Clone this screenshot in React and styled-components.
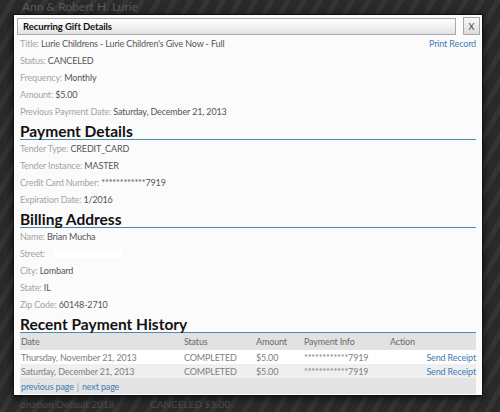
import React from "react";
import styled, { createGlobalStyle } from "styled-components";

const Global = createGlobalStyle`
  html, body { margin: 0; padding: 0; }
  body {
    width: 500px; height: 412px; overflow: hidden;
    font-family: Lato, "Open Sans", sans-serif;
    background: #2b2b2b;
  }
`;

const Page = styled.div`
  position: relative;
  width: 500px;
  height: 412px;
  overflow: hidden;
  background: repeating-linear-gradient(
    -60deg,
    #2a2a2a 0px,
    #2a2a2a 9px,
    #353535 9px,
    #353535 14px
  );
`;

const BgText = styled.div`
  position: absolute;
  left: ${(p) => p.$x}px;
  top: ${(p) => p.$y}px;
  color: ${(p) => p.$c || "#4a4a4a"};
  font-size: ${(p) => p.$s || 11}px;
  white-space: nowrap;
`;

const Modal = styled.div`
  position: absolute;
  left: 13px;
  top: 14px;
  width: 470px;
  height: 382px;
  background: #fbfbfb;
  border: 1px solid #111;
  box-shadow: 0 2px 8px rgba(0, 0, 0, 0.7);
  box-sizing: border-box;
  display: flex;
  flex-direction: column;
`;

const TitleRow = styled.div`
  display: flex;
  align-items: center;
  gap: 7px;
  height: 18px;
  margin: 2px 2px 0 3px;
`;

const TitleBar = styled.div`
  flex: 1;
  height: 15px;
  border: 1px solid #a8a8a8;
  background: linear-gradient(#ffffff, #e4e4e4);
  font-weight: bold;
  font-size: 9.5px;
  letter-spacing: -0.1px;
  color: #111;
  display: flex;
  align-items: center;
  padding-left: 5px;
`;

const CloseBtn = styled.div`
  width: 15px;
  height: 16px;
  border: 1px solid #a8a8a8;
  background: linear-gradient(#f8f8f8, #dcdcdc);
  font-size: 9px;
  color: #444;
  display: flex;
  align-items: center;
  justify-content: center;
`;

const Body = styled.div`
  padding: 0 6px 0 6px;
  display: flex;
  flex-direction: column;
  font-size: 9px;
  letter-spacing: -0.15px;
`;

const TopLine = styled.div`
  display: flex;
  justify-content: space-between;
  align-items: center;
  height: 17px;
`;

const Line = styled.div`
  height: 17px;
  display: flex;
  align-items: center;
  white-space: nowrap;
`;

const Label = styled.span`
  color: #a4a4a4;
`;

const Value = styled.span`
  color: #555;
`;

const Link = styled.span`
  color: #3f7cb6;
`;

const Heading = styled.div`
  font-weight: bold;
  font-size: 15.5px;
  letter-spacing: 0;
  color: #111;
  line-height: 16px;
  height: 16px;
  padding-top: 3px;
  border-bottom: 1px solid #4d8bad;
  display: flex;
  align-items: flex-end;
`;

const Redacted = styled.span`
  display: inline-block;
  width: 70px;
  height: 9px;
  margin-left: 8px;
  background: #ffffff;
`;

const Table = styled.div`
  display: flex;
  flex-direction: column;
`;

const Row = styled.div`
  display: grid;
  grid-template-columns: 163px 72px 48px 86px 1fr;
  height: ${(p) => p.$h || 14}px;
  align-items: center;
  background: ${(p) => p.$bg};
  color: ${(p) => (p.$head ? "#6a6a6a" : "#808080")};
  padding-left: 1px;
  white-space: nowrap;
`;

const Cell = styled.span`
  text-align: ${(p) => (p.$right ? "right" : "left")};
`;

const Footer = styled.div`
  height: 16px;
  background: #e4e4e4;
  display: flex;
  align-items: center;
  padding-left: 1px;
  color: #999;
  gap: 3px;
`;

export default function App() {
  return (
    <Page>
      <Global />
      <BgText $x={22} $y={-1} $s={12} $c="#5a5a5a">Ann &amp; Robert H. Lurie</BgText>
      <BgText $x={20} $y={398} $s={10} $c="#4d4d4d">onation Default 2018</BgText>
      <BgText $x={150} $y={398} $s={10} $c="#4d4d4d">CANCELED $5.00</BgText>
      <Modal>
        <TitleRow>
          <TitleBar>Recurring Gift Details</TitleBar>
          <CloseBtn>X</CloseBtn>
        </TitleRow>
        <Body>
          <TopLine>
            <span>
              <Label>Title: </Label>
              <Value>Lurie Childrens - Lurie Children's Give Now - Full</Value>
            </span>
            <Link>Print Record</Link>
          </TopLine>
          <Line><Label>Status:&nbsp;</Label><Value>CANCELED</Value></Line>
          <Line><Label>Frequency:&nbsp;</Label><Value>Monthly</Value></Line>
          <Line><Label>Amount:&nbsp;</Label><Value>$5.00</Value></Line>
          <Line><Label>Previous Payment Date:&nbsp;</Label><Value>Saturday, December 21, 2013</Value></Line>
          <Heading>Payment Details</Heading>
          <Line><Label>Tender Type:&nbsp;</Label><Value>CREDIT_CARD</Value></Line>
          <Line><Label>Tender Instance:&nbsp;</Label><Value>MASTER</Value></Line>
          <Line><Label>Credit Card Number:&nbsp;</Label><Value>************7919</Value></Line>
          <Line><Label>Expiration Date:&nbsp;</Label><Value>1/2016</Value></Line>
          <Heading>Billing Address</Heading>
          <Line><Label>Name:&nbsp;</Label><Value>Brian Mucha</Value></Line>
          <Line><Label>Street:</Label><Redacted /></Line>
          <Line><Label>City:&nbsp;</Label><Value>Lombard</Value></Line>
          <Line><Label>State:&nbsp;</Label><Value>IL</Value></Line>
          <Line><Label>Zip Code:&nbsp;</Label><Value>60148-2710</Value></Line>
          <Heading>Recent Payment History</Heading>
          <Table>
            <Row $bg="#e2e2e2" $h={17} $head>
              <Cell>Date</Cell>
              <Cell>Status</Cell>
              <Cell>Amount</Cell>
              <Cell>Payment Info</Cell>
              <Cell>Action</Cell>
            </Row>
            <Row $bg="#ffffff">
              <Cell>Thursday, November 21, 2013</Cell>
              <Cell>COMPLETED</Cell>
              <Cell>$5.00</Cell>
              <Cell>************7919</Cell>
              <Cell $right><Link>Send Receipt</Link></Cell>
            </Row>
            <Row $bg="#efefef">
              <Cell>Saturday, December 21, 2013</Cell>
              <Cell>COMPLETED</Cell>
              <Cell>$5.00</Cell>
              <Cell>************7919</Cell>
              <Cell $right><Link>Send Receipt</Link></Cell>
            </Row>
            <Footer>
              <Link>previous page</Link>
              <span>|</span>
              <Link>next page</Link>
            </Footer>
          </Table>
        </Body>
      </Modal>
    </Page>
  );
}
